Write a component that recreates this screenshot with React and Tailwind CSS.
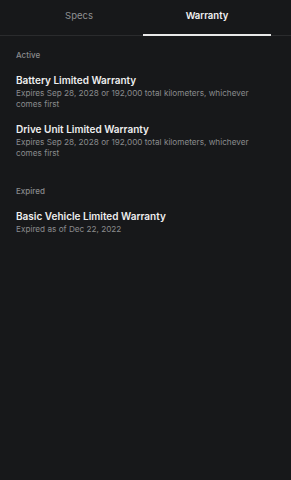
export default function App() {
  const active = [
    {
      title: 'Battery Limited Warranty',
      sub: 'Expires Sep 28, 2028 or 192,000 total kilometers, whichever comes first',
    },
    {
      title: 'Drive Unit Limited Warranty',
      sub: 'Expires Sep 28, 2028 or 192,000 total kilometers, whichever comes first',
    },
  ];
  const expired = [
    { title: 'Basic Vehicle Limited Warranty', sub: 'Expired as of Dec 22, 2022' },
  ];

  const Item = ({ title, sub }) => (
    <div className="mb-[14px]">
      <div className="text-[10px] leading-[13px] font-semibold text-[#eeeeee]">{title}</div>
      <div className="mt-[1px] text-[8.2px] leading-[10.5px] text-[#8a8b8d] pr-[16px]">{sub}</div>
    </div>
  );

  return (
    <div
      className="w-[291px] h-[480px] bg-[#17181a] overflow-hidden"
      style={{ fontFamily: 'Inter, "Noto Sans", sans-serif' }}
    >
      {/* Tabs */}
      <div className="relative h-[36px] border-b border-[#2a2b2d] flex pl-[15px]">
        <div className="w-[128px] flex items-center justify-center text-[9.5px] text-[#8f9092] pb-[2px]">
          Specs
        </div>
        <div className="relative w-[128px] flex items-center justify-center text-[9.5px] font-semibold text-[#f2f2f2] pb-[2px]">
          Warranty
          <div className="absolute left-0 right-0 bottom-[-1px] h-[2px] bg-[#e8e8e8]" />
        </div>
      </div>

      <div className="px-[16px]">
        <div className="pt-[14px] pb-[14px] text-[8px] leading-[10px] font-medium text-[#8a8b8d]">Active</div>
        {active.map((w) => (
          <Item key={w.title} {...w} />
        ))}
        <div className="pt-[14px] pb-[14px] text-[8px] leading-[10px] font-medium text-[#8a8b8d]">Expired</div>
        {expired.map((w) => (
          <Item key={w.title} {...w} />
        ))}
      </div>
    </div>
  );
}
